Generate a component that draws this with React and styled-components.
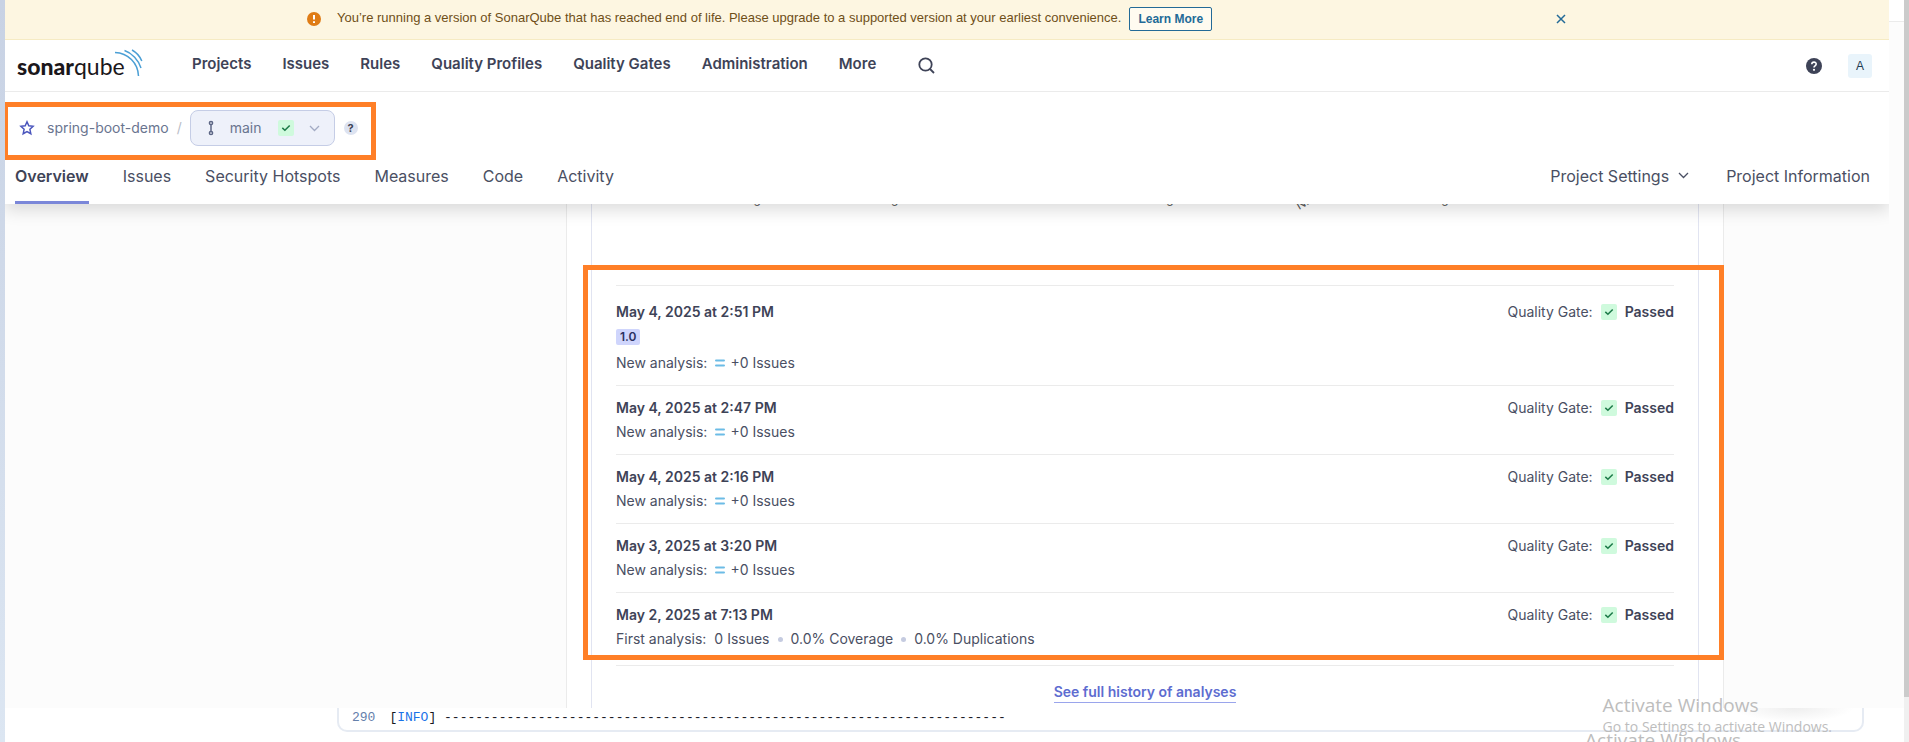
import React from "react";
import styled, { createGlobalStyle, css } from "styled-components";

const colors = {
  ink: "#3e4357",
  text: "#4a4f63",
  muted: "#6a7590",
  line: "#ebebeb",
  accent: "#5d6cd0",
  orange: "#ff7f27",
};

const Global = createGlobalStyle`
  * { box-sizing: border-box; }
  body {
    margin: 0;
    background: #fff;
    color: ${colors.text};
    font: 400 14px/20px Inter, "Liberation Sans", sans-serif;
  }
  button { font: inherit; color: inherit; cursor: pointer; }
  a { color: inherit; text-decoration: none; }
  svg { display: block; flex: none; }
`;

const Page = styled.div`
  position: relative;
  display: flex;
  min-height: 100vh;
  overflow: hidden;
`;

const LeftEdge = styled.div`
  flex: none;
  width: 5px;
  background: linear-gradient(#c8d2e4, #dce6f2);
`;

const Column = styled.div`
  flex: 1;
  min-width: 0;
  display: flex;
  flex-direction: column;
`;

const Split = styled.div`
  display: flex;
`;

const Gutter = styled.div`
  flex: none;
  width: 15px;
  background: #fcfcfc;
  &::before {
    content: "";
    display: block;
    height: 21px;
    background: #fff;
    border-bottom: 1px solid ${colors.line};
  }
`;

const ScrollTrack = styled.div`
  flex: none;
  width: 5px;
  background: #f0f0f0;
`;

const ScrollThumb = styled.div`
  height: 94%;
  background: #cbcbcb;
`;

const AppShell = styled.div`
  position: relative;
  flex: 1;
  min-width: 0;
  overflow: hidden;
  background: #fcfcfc;
`;

const Banner = styled.div`
  height: 40px;
  background: #fdf6e1;
  border-bottom: 1px solid #f6ebc3;
`;

const BannerInner = styled.div`
  max-width: 1280px;
  height: 38px;
  margin: 0 auto;
  padding-right: 21px;
  display: flex;
  align-items: center;
  color: #6f4f18;
  font-family: "Liberation Sans", Arial, sans-serif;
  font-size: 13px;
`;

const BannerText = styled.span`
  margin: 0 8px 0 16px;
  padding-bottom: 2px;
`;

const LearnMore = styled.a`
  height: 24px;
  padding: 0 8px;
  border: 1px solid #236a97;
  border-radius: 2px;
  background: #fffbf0;
  color: #236a97;
  font-size: 12px;
  font-weight: 700;
  line-height: 22px;
`;

const IconButton = styled.button`
  display: flex;
  padding: 0;
  border: 0;
  background: none;
  color: ${(p) => p.$color || colors.ink};
  margin-left: ${(p) => (p.$end ? "auto" : 0)};
`;

const NavBar = styled.header`
  position: relative;
  z-index: 2;
  height: 52px;
  display: flex;
  align-items: center;
  padding: 0 17px 0 12px;
  background: #fff;
  border-bottom: 1px solid ${colors.line};
`;

const NavLinks = styled.nav`
  display: flex;
  gap: 31px;
  margin: 0 42px 3px 49px;
  font-size: 15px;
  font-weight: 600;
  color: ${colors.ink};
`;

const NavTools = styled.div`
  margin-left: auto;
  display: flex;
  align-items: center;
  gap: 26px;
`;

const Avatar = styled.button`
  width: 24px;
  height: 24px;
  padding: 0;
  border: 0;
  border-radius: 3px;
  background: #e9f4fb;
  color: #1f3b52;
  font-family: "Liberation Sans", Arial, sans-serif;
  font-size: 12px;
`;

const ProjectHeader = styled.div`
  position: relative;
  z-index: 1;
  background: #fff;
  box-shadow: 0 6px 16px rgba(0, 0, 0, 0.14);
`;

const highlight = css`
  &::after {
    content: "";
    position: absolute;
    border: 5px solid ${colors.orange};
    pointer-events: none;
  }
`;

const Crumbs = styled.div`
  position: relative;
  width: fit-content;
  display: flex;
  align-items: center;
  height: 72px;
  padding: 0 18px 0 14px;
  color: ${colors.muted};
  ${highlight}
  &::after { inset: 10px 0 4px -2px; }
`;

const ProjectLink = styled.a`
  margin: 0 8px 0 12px;
`;

const Slash = styled.span`
  color: #b9bdc8;
`;

const BranchButton = styled.button`
  display: flex;
  align-items: center;
  width: 145px;
  height: 36px;
  margin: 0 9px 0 8px;
  padding: 0 14px;
  border: 1px solid #c5cde6;
  border-radius: 8px;
  background: #eef1fa;
  gap: 13px;
  & > svg:last-child { margin-left: auto; }
`;

const BranchName = styled.span`
  padding-right: 4px;
`;

const HelpDot = styled.button`
  width: 14px;
  height: 14px;
  padding: 0;
  border: 0;
  border-radius: 50%;
  background: #dde3f1;
  color: ${colors.ink};
  font-size: 11px;
  font-weight: 700;
  line-height: 14px;
`;

const TabBar = styled.nav`
  display: flex;
  justify-content: space-between;
  padding: 0 19px 0 10px;
`;

const TabGroup = styled.div`
  display: flex;
  gap: ${(p) => p.$gap}px;
`;

const Tab = styled.a`
  display: flex;
  align-items: center;
  gap: 9px;
  height: 40px;
  padding-bottom: 14px;
  font-size: 16px;
  line-height: 24px;
  font-weight: ${(p) => (p.$active ? 600 : 400)};
  color: ${(p) => (p.$active ? colors.ink : colors.text)};
  border-bottom: 3px solid ${(p) => (p.$active ? "#7b87d9" : "transparent")};
`;

const Main = styled.main`
  padding: 0 165px 0 561px;
`;

const Panel = styled.section`
  padding: 0 24px;
  background: #fff;
  border: solid ${colors.line};
  border-width: 0 1px;
`;

const Card = styled.div`
  padding: 0 24px;
  border: solid #e1e4f1;
  border-width: 0 1px;
`;

const ChartAxis = styled.svg`
  width: 100%;
  height: 81px;
  overflow: hidden;
  fill: #5c5c5c;
  font-size: 12px;
`;

const History = styled.ul`
  position: relative;
  margin: 0;
  padding: 4px 0;
  list-style: none;
  border: solid ${colors.line};
  border-width: 1px 0;
  ${highlight}
  &::after { inset: -21px -50px 5px -33px; }
`;

const Entry = styled.li`
  display: flex;
  justify-content: space-between;
  align-items: flex-start;
  padding: 12px 0;
  & + & { border-top: 1px solid ${colors.line}; }
`;

const EntryBody = styled.div`
  display: flex;
  flex-direction: column;
  gap: 4px;
`;

const EntryDate = styled.strong`
  color: ${colors.ink};
  font-weight: 600;
`;

const Version = styled.span`
  width: fit-content;
  margin: 3px 0 4px;
  padding: 0 4px;
  border-radius: 2px;
  background: #cfd5fc;
  color: #2b3061;
  font-size: 12px;
  font-weight: 600;
  line-height: 16px;
`;

const Inline = styled.span`
  display: flex;
  align-items: center;
  gap: ${(p) => p.$gap || 8}px;
`;

const Dot = styled.span`
  width: 5px;
  height: 5px;
  border-radius: 50%;
  background: #c5cbe0;
`;

const CheckBadge = styled.span`
  display: flex;
  align-items: center;
  justify-content: center;
  width: 16px;
  height: 16px;
  border-radius: 2px;
  background: #cffadd;
`;

const Footer = styled.div`
  display: flex;
  justify-content: center;
  height: 42px;
  padding-top: 16px;
`;

const HistoryLink = styled.a`
  height: 21px;
  color: ${colors.accent};
  font-weight: 600;
  border-bottom: 1px solid #9aa5ec;
`;

const LogArea = styled.div`
  position: relative;
  height: 34px;
  padding: 0 40px 0 332px;
  background: #fff;
  &::before {
    content: "";
    position: absolute;
    top: 0;
    right: 50px;
    width: 120px;
    height: 14px;
    background: radial-gradient(ellipse at top, #eeeeee, #ffffff 70%);
  }
`;

const LogBox = styled.pre`
  position: relative;
  margin: 0;
  height: 24px;
  padding-left: 13px;
  border: 2px solid #e6ebf3;
  border-top: 0;
  border-radius: 0 0 10px 10px;
  color: #16181f;
  font: 13px/20px "Liberation Mono", monospace;
  display: flex;
  gap: 14px;
`;

const LineNo = styled.span`
  color: #6580ab;
`;

const Level = styled.span`
  color: #1a73e8;
`;

const Watermark = styled.div`
  position: absolute;
  z-index: 2;
  right: ${(p) => p.$right}px;
  top: ${(p) => p.$top}px;
  color: #bdbdbd;
  font: 14px/20px "Open Sans", "Noto Sans", sans-serif;
  white-space: nowrap;
  pointer-events: none;
`;

const WatermarkTitle = styled.div`
  font-size: 19px;
  line-height: 24px;
`;

const Check = () => (
  <CheckBadge>
    <svg width="10" height="8" viewBox="0 0 10 8" fill="none" stroke="#1c7a48" strokeWidth="1.5">
      <path d="M1.3 3.9 3.9 6.3 8.7 1.4" />
    </svg>
  </CheckBadge>
);

const Chevron = ({ color }) => (
  <svg width="11" height="7" viewBox="0 0 11 7" fill="none" stroke={color} strokeWidth="1.3">
    <path d="M1 1l4.5 4.5L10 1" />
  </svg>
);

const Equal = () => (
  <svg width="10" height="8" viewBox="0 0 10 8" fill="none" stroke="#6cbce6" strokeWidth="2" strokeLinecap="round">
    <path d="M1 1.5h8M1 6.5h8" />
  </svg>
);

const Logo = () => (
  <svg width="126" height="34" viewBox="0 0 126 34" role="img" aria-label="SonarQube">
    <text x="0" y="26" fontFamily="Lato, sans-serif" fontSize="23" fill="#1b171b">
      <tspan fontWeight="900">sonar</tspan>
      <tspan fontWeight="400">qube</tspan>
    </text>
    <g fill="none" stroke="#4b9fd5" strokeWidth="1.5">
      <path d="M98 3.500C111 4 121 14 121.500 27" />
      <path d="M107.500 1.500C115 4 121.500 11 124 19" />
      <path d="M115 1C119.500 3.500 123 7.500 124.800 12" />
    </g>
  </svg>
);

const Change = () => (
  <Inline $gap={5}>
    <Equal />
    +0 Issues
  </Inline>
);

const entries = [
  { date: "May 4, 2025 at 2:51 PM", version: "1.0" },
  { date: "May 4, 2025 at 2:47 PM" },
  { date: "May 4, 2025 at 2:16 PM" },
  { date: "May 3, 2025 at 3:20 PM" },
  { date: "May 2, 2025 at 7:13 PM", first: true },
];

const navItems = ["Projects", "Issues", "Rules", "Quality Profiles", "Quality Gates", "Administration", "More"];
const tabs = ["Overview", "Issues", "Security Hotspots", "Measures", "Code", "Activity"];
const ticks = ["13%", "26%", "52%", "78%"];

export default function App() {
  return (
    <>
      <Global />
      <Page>
        <LeftEdge />
        <Column>
          <Split>
            <AppShell>
              <Banner role="alert">
                <BannerInner>
                  <svg width="14" height="14" viewBox="0 0 14 14">
                    <circle cx="7" cy="7" r="7" fill="#df7c15" />
                    <path d="M7 3v4.500M7 9.300v1.800" stroke="#fff" strokeWidth="2" />
                  </svg>
                  <BannerText>
                    You’re running a version of SonarQube that has reached end of life. Please upgrade to a supported
                    version at your earliest convenience.
                  </BannerText>
                  <LearnMore href="#upgrade">Learn More</LearnMore>
                  <IconButton $end $color="#236a97" aria-label="Dismiss">
                    <svg width="10" height="10" viewBox="0 0 10 10" fill="none" stroke="currentColor" strokeWidth="1.5">
                      <path d="M1 1l8 8M9 1L1 9" />
                    </svg>
                  </IconButton>
                </BannerInner>
              </Banner>
              <NavBar>
                <Logo />
                <NavLinks>
                  {navItems.map((n) => (
                    <a key={n} href="#nav">{n}</a>
                  ))}
                </NavLinks>
                <IconButton aria-label="Search">
                  <svg width="17" height="17" viewBox="0 0 17 17" fill="none" stroke="currentColor" strokeWidth="1.8">
                    <circle cx="7.500" cy="7.500" r="6.200" />
                    <path d="M12 12l4 4" />
                  </svg>
                </IconButton>
                <NavTools>
                  <IconButton aria-label="Help">
                    <svg width="16" height="16" viewBox="0 0 16 16">
                      <circle cx="8" cy="8" r="8" fill="currentColor" />
                      <path d="M5.800 6.300c0-2.900 4.400-2.800 4.400-.2 0 1.700-2.200 1.700-2.200 3.300" fill="none" stroke="#fff" strokeWidth="1.600" />
                      <circle cx="8" cy="11.800" r="1.100" fill="#fff" />
                    </svg>
                  </IconButton>
                  <Avatar>A</Avatar>
                </NavTools>
              </NavBar>
              <ProjectHeader>
                <Crumbs>
                  <IconButton $color="#4b56bd" aria-label="Favorite">
                    <svg width="16" height="16" viewBox="0 0 16 16" fill="none" stroke="currentColor" strokeWidth="1.500">
                      <path d="M8 1.800l1.800 4 4.300.5-3.200 3 .9 4.400L8 11.500l-3.800 2.200.9-4.400-3.200-3 4.300-.5z" />
                    </svg>
                  </IconButton>
                  <ProjectLink href="#project">spring-boot-demo</ProjectLink>
                  <Slash>/</Slash>
                  <BranchButton>
                    <svg width="12" height="16" viewBox="0 0 12 16" fill="none" stroke="#5c6685" strokeWidth="1.500">
                      <circle cx="6" cy="3" r="1.600" />
                      <circle cx="6" cy="13" r="1.600" />
                      <path d="M6 4.600v6.800" />
                    </svg>
                    <BranchName>main</BranchName>
                    <Check />
                    <Chevron color="#a3abc4" />
                  </BranchButton>
                  <HelpDot aria-label="Branch help">?</HelpDot>
                </Crumbs>
                <TabBar>
                  <TabGroup $gap={34}>
                    {tabs.map((t) => (
                      <Tab key={t} href="#tab" $active={t === "Overview"}>{t}</Tab>
                    ))}
                  </TabGroup>
                  <TabGroup $gap={37}>
                    <Tab href="#settings">
                      Project Settings
                      <Chevron color={colors.text} />
                    </Tab>
                    <Tab href="#info">Project Information</Tab>
                  </TabGroup>
                </TabBar>
              </ProjectHeader>
              <Main>
                <Panel>
                  <Card>
                    {/* bottom edge of the chart's axis labels, scrolled under the header */}
                    <ChartAxis>
                      {ticks.map((x) => (
                        <text key={x} x={x} y="-1">g</text>
                      ))}
                      <text transform="translate(683 6) rotate(-30)">N.</text>
                    </ChartAxis>
                    <History>
                      {entries.map((e) => (
                        <Entry key={e.date}>
                          <EntryBody>
                            <EntryDate>{e.date}</EntryDate>
                            {e.version && <Version>{e.version}</Version>}
                            {e.first ? (
                              <Inline>
                                First analysis: <span>0 Issues</span>
                                <Dot />
                                <span>0.0% Coverage</span>
                                <Dot />
                                <span>0.0% Duplications</span>
                              </Inline>
                            ) : (
                              <Inline>
                                New analysis: <Change />
                              </Inline>
                            )}
                          </EntryBody>
                          <Inline>
                            Quality Gate:
                            <Check />
                            <EntryDate>Passed</EntryDate>
                          </Inline>
                        </Entry>
                      ))}
                    </History>
                    <Footer>
                      <HistoryLink href="#history">See full history of analyses</HistoryLink>
                    </Footer>
                  </Card>
                </Panel>
              </Main>
            </AppShell>
            <Gutter />
          </Split>
          <LogArea>
            <LogBox>
              <LineNo>290</LineNo>
              <span>
                [<Level>INFO</Level>] {"-".repeat(72)}
              </span>
            </LogBox>
          </LogArea>
        </Column>
        <ScrollTrack>
          <ScrollThumb />
        </ScrollTrack>
        <Watermark $right={77} $top={693}>
          <WatermarkTitle>Activate Windows</WatermarkTitle>
          Go to Settings to activate Windows.
        </Watermark>
        <Watermark $right={168} $top={728}>
          <WatermarkTitle>Activate Windows</WatermarkTitle>
        </Watermark>
      </Page>
    </>
  );
}
